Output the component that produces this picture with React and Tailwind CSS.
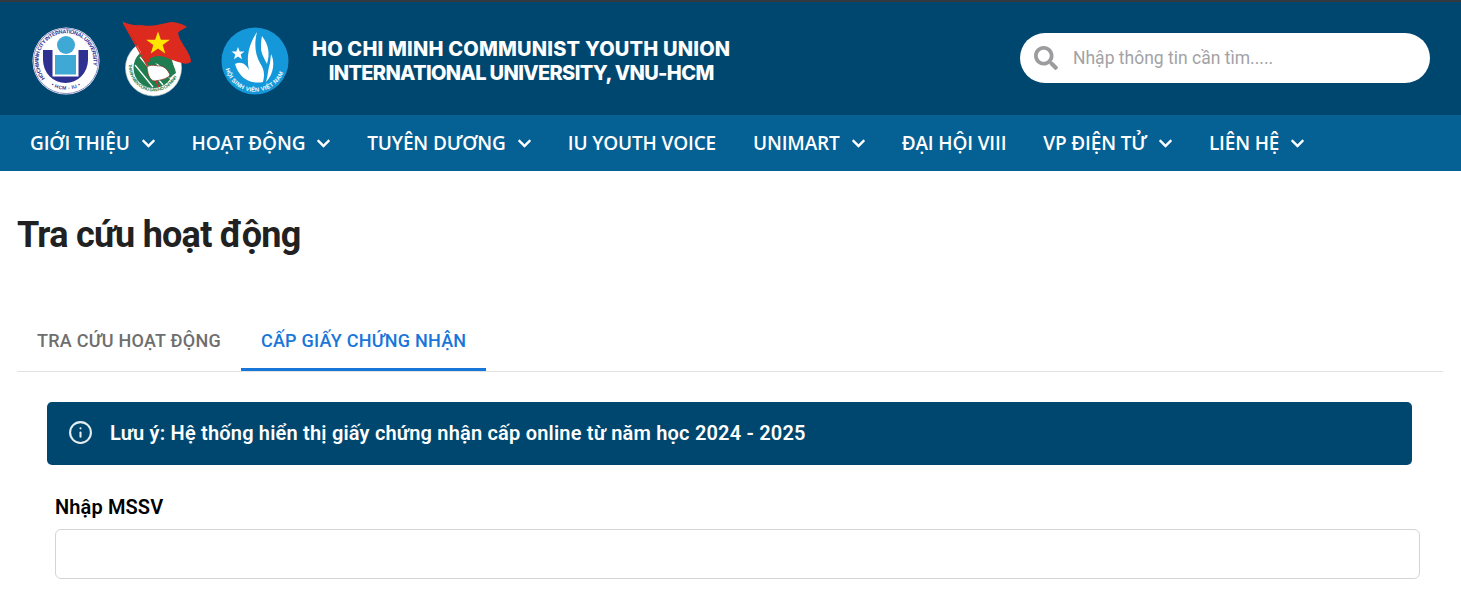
import { Info } from "lucide-react";
import { FaChevronDown, FaSearch } from "react-icons/fa";

const navItems = [
  { label: "GIỚI THIỆU", arrow: true },
  { label: "HOẠT ĐỘNG", arrow: true },
  { label: "TUYÊN DƯƠNG", arrow: true },
  { label: "IU YOUTH VOICE" },
  { label: "UNIMART", arrow: true },
  { label: "ĐẠI HỘI VIII" },
  { label: "VP ĐIỆN TỬ", arrow: true },
  { label: "LIÊN HỆ", arrow: true },
];

function IuLogo() {
  return (
    <svg width="68" height="68" viewBox="0 0 68 68" className="shrink-0">
      <circle cx="34" cy="34" r="33.5" fill="#fff" />
      <circle cx="34" cy="34" r="32.6" fill="none" stroke="#7c7ebd" strokeWidth="0.9" />
      <defs>
        <path id="iu-top" d="M 13 51.500 A 27.500 27.500 0 1 1 55 51.500" />
        <path id="iu-bottom" d="M 19 58.500 A 29 29 0 0 0 49 58.500" />
      </defs>
      <text fontSize="5.4" fontWeight="700" fill="#2e3192" fontFamily="'Liberation Sans', sans-serif">
        <textPath href="#iu-top" textLength="110" lengthAdjust="spacing">
          HOCHIMINH CITY INTERNATIONAL UNIVERSITY
        </textPath>
      </text>
      <text fontSize="5" fontWeight="700" fill="#2e3192" fontFamily="'Liberation Sans', sans-serif">
        <textPath href="#iu-bottom" textLength="31">• HCM - IU •</textPath>
      </text>
      <path d="M11 23 H56 V33 A22.500 23 0 0 1 11 33 Z" fill="#2e3192" />
      <rect x="20.500" y="21" width="26" height="28.500" fill="#fff" />
      <rect x="23" y="28" width="21" height="19.500" fill="#3fa9d6" />
      <circle cx="34" cy="18" r="9" fill="#3fa9d6" />
    </svg>
  );
}

function YouthUnionLogo() {
  return (
    <svg width="69" height="76" viewBox="0 0 69 76" className="shrink-0">
      <circle cx="30.500" cy="47" r="28" fill="#fff" stroke="#c9d8cf" strokeWidth="0.6" />
      <defs>
        <path id="youth-ring" d="M 6 43 A 25 25 0 0 0 55 52" />
      </defs>
      <text fontSize="4.4" fontWeight="700" fill="#1f7d4f" fontFamily="'Liberation Sans', sans-serif">
        <textPath href="#youth-ring" textLength="70">THANH NIÊN CỘNG SẢN HỒ CHÍ MINH</textPath>
      </text>
      <circle cx="30.500" cy="47" r="20" fill="#1f7d4f" />
      <path d="M12 44 L30 66 M17 36 L40 64 M24 32 L48 58 M33 30 L50 48" stroke="#fff" strokeWidth="1.300" />
      <path d="M0 1 C6 3 12 5 17 4 C24 5 29 5 34 4 C40 3 45 1 50 1 C55 2 60 3 64 6 C61 8 57 9 55 12 C56 17 58 20 61 25 C65 31 68 36 68 41 C65 43 62 43 59 42 C53 41 46 37 40 36 C34 36 29 39 24 42 C17 30 10 17 2 5 Z" fill="#dc2a1f" />
      <path d="M0 1 L36 66" stroke="#dc2a1f" strokeWidth="1.500" />
      <path d="M35 10.500 L37.900 18.800 L46.800 18.800 L39.700 24.100 L42.200 32.500 L35 27.500 L27.800 32.500 L30.300 24.100 L23.200 18.800 L32.100 18.800 Z" fill="#ffe600" />
      <path d="M26 38 C32 34 40 34 46 38 C50 42 52 47 53 52 L46 57 C45 50 41 45 35 43 C31 42 28 41 26 38 Z" fill="#1f7d4f" />
      <path d="M24 46 C28 43 32 45 38 45 C42 46 45 49 47 54 C44 58 38 59 32 60 C28 60 25 56 24 46 Z" fill="#fff" stroke="#8c2a20" strokeWidth="0.7" />
    </svg>
  );
}

function StudentLogo() {
  return (
    <svg width="68" height="68" viewBox="0 0 68 68" className="shrink-0">
      <circle cx="34" cy="34" r="33.500" fill="#1598d9" />
      <path d="M17 20 L18.700 24.600 L23.500 24.600 L19.700 27.600 L21 32.300 L17 29.500 L13 32.300 L14.300 27.600 L10.500 24.600 L15.300 24.600 Z" fill="#fff" />
      <path d="M14 37 C20 34 25 37 28 43 C25 30 28 17 36 5 C33 17 34 27 39 36 C43 42 44 47 42 55 C34 57 24 54 19 47 C16 43 15 40 14 37 Z" fill="#fff" />
      <path d="M41 9 C48 18 49 27 46 37 C43 31 40 26 40 21 C40 17 40 13 41 9 Z" fill="#fff" />
      <path d="M50 27 C54 34 53 47 45 55 C47 48 47 42 49 36 Z" fill="#fff" />
      <defs>
        <path id="student-ring" d="M 4.500 42 A 30.500 30.500 0 0 0 63.500 42" />
      </defs>
      <text fontSize="5.8" fontWeight="700" fill="#fff" fontFamily="'Liberation Sans', sans-serif">
        <textPath href="#student-ring" textLength="76">HỘI SINH VIÊN VIỆT NAM</textPath>
      </text>
    </svg>
  );
}

export default function App() {
  return (
    <main className="min-h-[593px] bg-white font-['Roboto',sans-serif]">
      {/* HEADER */}
      <header className="h-[115px] bg-[#00476f] border-t-2 border-[#333a3f] flex items-center justify-between pl-[32px] pr-[31px]">
        <div className="flex items-center">
          <div className="mt-[4px]">
            <IuLogo />
          </div>
          <div className="ml-[23px]">
            <YouthUnionLogo />
          </div>
          <div className="ml-[29px] mt-[5px]">
            <StudentLogo />
          </div>
          <div className="ml-[23px] mt-[5px] text-center text-white font-['Inter',sans-serif] font-extrabold text-[20px] leading-[24px]">
            <div className="tracking-[0.19px]">HO CHI MINH COMMUNIST YOUTH UNION</div>
            <div className="tracking-[-0.65px]">INTERNATIONAL UNIVERSITY, VNU-HCM</div>
          </div>
        </div>
        <div className="w-[410px] h-[50px] -mt-[2px] bg-white rounded-full flex items-center pl-[14px]">
          <FaSearch className="text-[#9c9c9f]" size={24} />
          <span className="ml-[15px] mt-[2px] text-[17.5px] text-[#a2a2a5]">Nhập thông tin cần tìm.....</span>
        </div>
      </header>

      {/* NAV */}
      <nav className="h-[56px] bg-[#056094] flex items-center pl-[30px] gap-[37px] font-['Open_Sans',sans-serif] font-semibold text-[19px] tracking-[-0.15px] text-white">
        {navItems.map((item) => (
          <div key={item.label} className="flex items-center whitespace-nowrap">
            <span>{item.label}</span>
            {item.arrow && <FaChevronDown className="ml-[11px] -mr-[1px]" size={15} />}
          </div>
        ))}
      </nav>

      {/* CONTENT */}
      <section className="px-[17px] pr-[18px]">
        <h1 className="pt-[39px] text-[36px] leading-[50px] font-bold text-[#212121] tracking-[-0.75px]">
          Tra cứu hoạt động
        </h1>

        <div className="mt-[57px] flex border-b border-[#e2e2e2] h-[55px] text-[18px] font-medium tracking-[0.25px]">
          <div className="px-[20px] h-[54px] pb-[8px] flex items-center text-[#6e6e6e]">
            TRA CỨU HOẠT ĐỘNG
          </div>
          <div className="px-[20px] h-[54px] pb-[5px] flex items-center text-[#1976d9] border-b-[3px] border-[#1976d9]">
            CẤP GIẤY CHỨNG NHẬN
          </div>
        </div>

        <div className="ml-[30px] mr-[31px] mt-[30px] h-[63px] pb-[2px] bg-[#00476f] rounded-[5px] flex items-center pl-[21px] text-white">
          <Info size={25} strokeWidth={2} className="text-[#e6edf1]" />
          <span className="ml-[17px] text-[20px] font-semibold tracking-[0.19px]">
            Lưu ý: Hệ thống hiển thị giấy chứng nhận cấp online từ năm học 2024 - 2025
          </span>
        </div>

        <div className="ml-[38px] mr-[23px] mt-[27px] pb-[14px]">
          <label className="block text-[20px] leading-[30px] font-semibold text-black tracking-[0.12px]">Nhập MSSV</label>
          <div className="mt-[7px] h-[50px] rounded-[6px] border border-[#d4d4d8] bg-white" />
        </div>
      </section>
    </main>
  );
}
